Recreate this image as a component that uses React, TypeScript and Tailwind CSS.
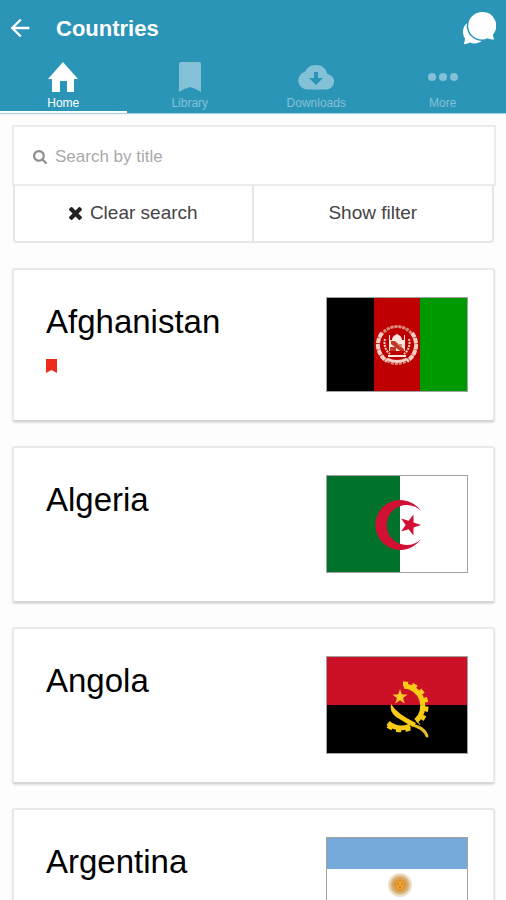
import { useState } from "react";
import type { ReactNode } from "react";
import { IoMdArrowBack } from "react-icons/io";

const starPoints = (cx: number, cy: number, r: number, turn: number) =>
  Array.from({ length: 10 }, (_, i) => {
    const radius = i % 2 === 0 ? r : r * 0.4;
    const angle = ((turn + i * 36) * Math.PI) / 180;
    return `${(cx + radius * Math.cos(angle)).toFixed(2)},${(cy + radius * Math.sin(angle)).toFixed(2)}`;
  }).join(" ");

const ChatIcon = () => (
  <svg viewBox="0 0 34 34" className="size-[34px]" fill="#fff">
    <path d="M11 9a12 12 0 0 0-8 18.500q0 3-1.300 5.700 3.500-.2 6-1.700A13 13 0 0 0 21 29z" />
    <path
      d="M19.500 1a13.700 13.700 0 1 0 6 26.200q3 1.500 6.700 1.300-1.300-2.500-1.200-5A13.700 13.700 0 0 0 19.500 1z"
      stroke="#2b95b8"
      strokeWidth="3"
      paintOrder="stroke"
    />
  </svg>
);

const HomeIcon = () => (
  <svg viewBox="0 0 36 36" className="size-9" fill="currentColor">
    <path d="M18 3L33 20h-4v13h-7V22h-7v11H7V20H3z" />
  </svg>
);

const LibraryIcon = () => (
  <svg viewBox="0 0 36 36" className="size-9" fill="currentColor">
    <path d="M9 3h18a2 2 0 0 1 2 2v28q-5-3.500-11-5-6 1.500-11 5V5a2 2 0 0 1 2-2z" />
  </svg>
);

const CloudIcon = () => (
  <svg viewBox="0 0 36 36" className="size-9" fill="currentColor">
    <path
      fillRule="evenodd"
      d="M9 30.500a9 9 0 0 1-2-17.700A12 12 0 0 1 29.500 15 7.800 7.800 0 0 1 28.500 30.500zM16 13v6h-5l7 7 7-7h-5v-6z"
    />
  </svg>
);

const MoreIcon = () => (
  <svg viewBox="0 0 36 36" className="size-9" fill="currentColor">
    <circle cx="7" cy="18" r="4" />
    <circle cx="18" cy="18" r="4" />
    <circle cx="29" cy="18" r="4" />
  </svg>
);

const SearchIcon = () => (
  <svg viewBox="64 128 1664 1664" className="size-3.5 shrink-0" fill="#8f8f8f">
    <path d="M1216 832q0-185-131.500-316.500t-316.500-131.500-316.500 131.500-131.500 316.500 131.500 316.500 316.500 131.500 316.500-131.500 131.500-316.500zm512 832q0 52-38 90t-90 38q-54 0-90-38l-343-342q-179 124-399 124-143 0-273.500-55.500t-225-150-150-225-55.500-273.500 55.500-273.500 150-225 225-150 273.500-55.500 273.500 55.500 225 150 150 225 55.500 273.500q0 220-124 399l343 343q37 37 37 90z" />
  </svg>
);

const ClearIcon = () => (
  <svg viewBox="302 366 1188 1188" className="size-[13px]" fill="#222">
    <path d="M1490 1322q0 40-28 68l-136 136q-28 28-68 28t-68-28l-294-294-294 294q-28 28-68 28t-68-28l-136-136q-28-28-28-68t28-68l294-294-294-294q-28-28-28-68t28-68l136-136q28-28 68-28t68 28l294 294 294-294q28-28 68-28t68 28l136 136q28 28 28 68t-28 68l-294 294 294 294q28 28 28 68z" />
  </svg>
);

const AfghanistanFlag = () => (
  <svg viewBox="0 0 140 93" className="block w-full">
    <path fill="#000" d="M0 0h47v93H0z" />
    <path fill="#bf0000" d="M47 0h46v93H47z" />
    <path fill="#090" d="M93 0h47v93H93z" />
    <g fill="none" stroke="#f3cfc4">
      <circle cx="70" cy="47" r="18.500" strokeWidth="3" strokeDasharray="3 1" stroke="#d98774" />
      <path d="M55 35a19 19 0 0 0 5 28M85 35a19 19 0 0 1-5 28" strokeWidth="4" strokeDasharray="5 1" />
      <path d="M58 41a14 14 0 0 0 5 15M82 41a14 14 0 0 1-5 15" strokeWidth="2" strokeDasharray="2 1" />
      <path d="M61 31q9-5 18 0" stroke="#d98774" />
      <path d="M60 61q10 5 20 0" strokeWidth="3" />
    </g>
    <g fill="#fbe9e0">
      <path d="M65 42q0-4 5-6 5 2 5 6h2v-5h1v16H62V37h1v5z" />
      <path d="M61 57h18v2H61z" />
    </g>
    <path d="M64 43h4l9 8v2h-4l-9-7zM63 49h6v4h-6z" fill="#c23a26" />
    <path d="M70 46l5 4v-4z" fill="#d98774" />
  </svg>
);

const AlgeriaFlag = () => (
  <svg viewBox="0 0 140 96" className="block w-full">
    <path fill="#fff" d="M0 0h140v96H0z" />
    <path fill="#007229" d="M0 0h73v96H0z" />
    <path fill="#d21034" d="M94 35A25 25 0 1 0 94 63 20 20 0 1 1 94 35z" />
    <polygon fill="#d21034" points={starPoints(83, 49, 11, 0)} />
  </svg>
);

const AngolaFlag = () => (
  <svg viewBox="0 0 140 96" className="block w-full">
    <path fill="#000" d="M0 0h140v96H0z" />
    <path fill="#cc1126" d="M0 0h140v48H0z" />
    <g fill="none" stroke="#f7cb16">
      <path d="M77 29A20 20 0 0 1 89 64M83 69A21 21 0 0 1 61 66" strokeWidth="5" />
      <path d="M76 27A22 22 0 0 1 91 66M83 71A23 23 0 0 1 59 67" strokeWidth="5" strokeDasharray="5 4" />
      <path d="M71 58Q80 66 91 70 98 73 100 79" strokeWidth="3" strokeLinecap="round" stroke="#e3bb24" />
    </g>
    <path d="M64 47Q62 54 69 60L86 70 89 66Q70 57 64 47z" fill="#f7cb16" />
    <polygon fill="#f9ce2b" points={starPoints(73, 40, 8, -90)} />
  </svg>
);

const ArgentinaFlag = () => (
  <svg viewBox="0 0 140 93" className="block w-full">
    <path fill="#75a9d9" d="M0 0h140v93H0z" />
    <path fill="#fff" d="M0 31h140v31H0z" />
    <circle cx="73" cy="47" r="12" fill="#efe0c8" />
    <circle cx="73" cy="47" r="10" fill="#dfbc8c" />
    <circle cx="73" cy="47" r="8" fill="#d9a45c" />
    <circle cx="73" cy="47" r="5" fill="#f0a32c" stroke="#cf8a2c" />
    <path d="M70 46h2M74 46h2M72 49h2" stroke="#a8702a" />
  </svg>
);

const tabs = [
  { label: "Home", icon: <HomeIcon /> },
  { label: "Library", icon: <LibraryIcon /> },
  { label: "Downloads", icon: <CloudIcon /> },
  { label: "More", icon: <MoreIcon /> },
];

const countries = [
  { name: "Afghanistan", flag: <AfghanistanFlag />, saved: true },
  { name: "Algeria", flag: <AlgeriaFlag />, saved: false },
  { name: "Angola", flag: <AngolaFlag />, saved: false },
  { name: "Argentina", flag: <ArgentinaFlag />, saved: false },
];

const CountryCard = ({ name, flag, saved }: { name: string; flag: ReactNode; saved: boolean }) => (
  <li className="flex items-start justify-between rounded-[3px] border-2 border-[#e9e9e9] border-b-[#d6d6d6] bg-white pt-[27px] pr-[25px] pb-7 pl-8 shadow-[0_1px_2px_rgba(0,0,0,0.12)]">
    <div>
      <h2 className="text-[33px] leading-[50px] text-black">{name}</h2>
      {saved && (
        <svg viewBox="0 0 11 14" className="mt-3 h-3.5 w-[11px]" role="img" aria-label="Saved">
          <path d="M0 0h11v14l-5.500-3L0 14z" fill="#ee2a1c" />
        </svg>
      )}
    </div>
    <div className="w-[142px] shrink-0 border border-[#a3a3a3]">{flag}</div>
  </li>
);

const App: React.FC = () => {
  const [query, setQuery] = useState("");
  const [activeTab, setActiveTab] = useState("Home");

  return (
    <div className="h-screen overflow-hidden bg-[#fdfdfd] font-['Liberation_Sans',Arial,sans-serif]">
      <header className="bg-[#2b95b8] text-white shadow-[0_1px_1px_rgba(43,149,184,0.4)]">
        <div className="flex h-14 items-center pr-2.5 pl-1.5">
          <button type="button" aria-label="Back">
            <IoMdArrowBack className="size-7" />
          </button>
          <h1 className="ml-[22px] flex-1 text-[22px] font-bold">Countries</h1>
          <button type="button" aria-label="Messages">
            <ChatIcon />
          </button>
        </div>
        <nav className="grid grid-cols-4">
          {tabs.map(({ label, icon }) => (
            <button
              key={label}
              type="button"
              onClick={() => setActiveTab(label)}
              className={
                activeTab === label
                  ? "flex flex-col items-center border-b-2 border-white pt-[3px] text-white"
                  : "flex flex-col items-center border-b-2 border-transparent pt-[3px] text-[#83c1d6]"
              }
            >
              {icon}
              <span className="text-xs leading-4">{label}</span>
            </button>
          ))}
        </nav>
      </header>

      <main className="pt-3 pr-[11px] pl-3">
        <label className="-mr-px flex h-[61px] items-center gap-2 border-2 border-[#ebebeb] bg-white pt-0.5 pr-4 pl-[19px]">
          <SearchIcon />
          <input
            type="text"
            aria-label="Search by title"
            placeholder="Search by title"
            value={query}
            onChange={(e) => setQuery(e.target.value)}
            className="min-w-0 flex-1 bg-transparent text-[17px] text-[#333] outline-none placeholder:text-[#a9a9a9]"
          />
        </label>
        <div className="mx-px grid h-[57px] grid-cols-2 rounded-b border-x-2 border-b-2 border-[#e6e6e6] bg-white text-[19px] text-[#444]">
          <button
            type="button"
            onClick={() => setQuery("")}
            className="flex items-center justify-center gap-2 border-r-2 border-[#e6e6e6]"
          >
            <ClearIcon />
            Clear search
          </button>
          <button type="button">Show filter</button>
        </div>

        <ul className="mt-[25px] flex flex-col gap-6">
          {countries.map((country) => (
            <CountryCard key={country.name} {...country} />
          ))}
        </ul>
      </main>
    </div>
  );
};

export default App;
